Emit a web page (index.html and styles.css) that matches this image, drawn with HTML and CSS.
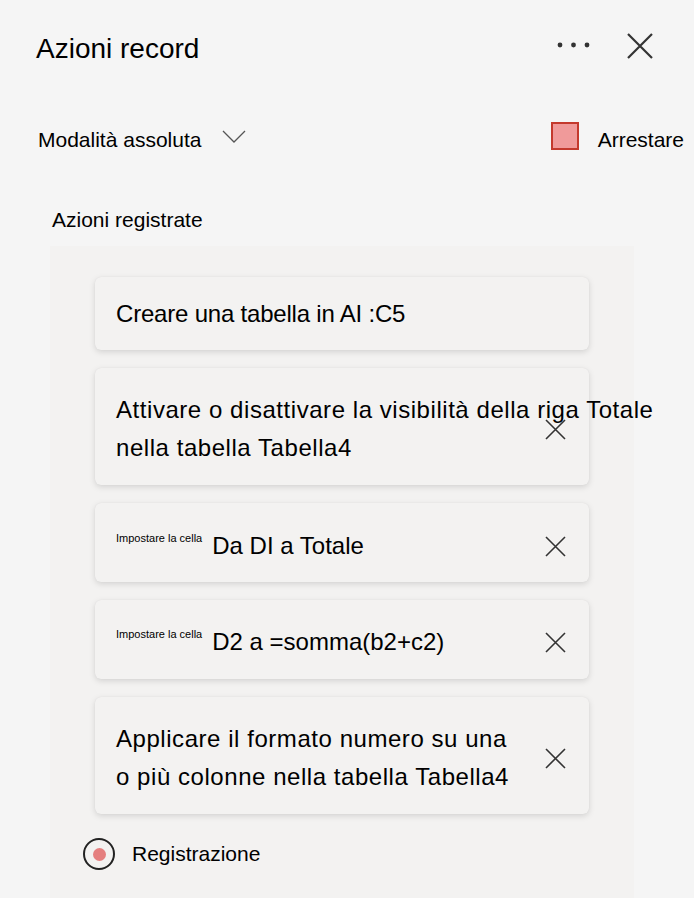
FILE: index.html
```html
<!DOCTYPE html>
<html>
<head>
	<title>Azioni record</title>
	<link rel="stylesheet" href="styles.css">
</head>
<body>
	<div class="header">
		<div class="title">Azioni record</div>
		<svg class="dots" width="33" height="6" viewBox="0 0 33 6">
			<circle cx="3" cy="3" r="2.4" fill="#333"/>
			<circle cx="16.5" cy="3" r="2.4" fill="#333"/>
			<circle cx="30" cy="3" r="2.4" fill="#333"/>
		</svg>
		<svg class="close" width="26" height="26" viewBox="0 0 26 26">
			<path d="M1 1 L25 25 M25 1 L1 25" stroke="#333" stroke-width="2.2" fill="none"/>
		</svg>
	</div>

	<div class="mode-row">
		<span class="mode">Modalità assoluta</span>
		<svg class="chevron" width="24" height="13" viewBox="0 0 24 13">
			<path d="M1 1 L12 12 L23 1" stroke="#555" stroke-width="1.3" fill="none"/>
		</svg>
		<span class="stop-box"></span>
		<span class="stop">Arrestare</span>
	</div>

	<div class="section-label">Azioni registrate</div>

	<div class="panel">
		<div class="card first">
			<div class="card-text">Creare una tabella in AI :C5</div>
		</div>

		<div class="card">
			<div class="card-text nowrap">Attivare o disattivare la visibilità della riga Totale<br>nella tabella Tabella4</div>
			<svg class="remove" width="21" height="21" viewBox="0 0 21 21">
				<path d="M1 1 L20 20 M20 1 L1 20" stroke="#333" stroke-width="1.6" fill="none"/>
			</svg>
		</div>

		<div class="card cell">
			<div class="card-text"><span class="hint">Impostare la cella</span>Da DI a Totale</div>
			<svg class="remove" width="21" height="21" viewBox="0 0 21 21">
				<path d="M1 1 L20 20 M20 1 L1 20" stroke="#333" stroke-width="1.6" fill="none"/>
			</svg>
		</div>

		<div class="card">
			<div class="card-text"><span class="hint">Impostare la cella</span>D2 a =somma(b2+c2)</div>
			<svg class="remove" width="21" height="21" viewBox="0 0 21 21">
				<path d="M1 1 L20 20 M20 1 L1 20" stroke="#333" stroke-width="1.6" fill="none"/>
			</svg>
		</div>

		<div class="card">
			<div class="card-text nowrap">Applicare il formato numero su una<br>o più colonne nella tabella Tabella4</div>
			<svg class="remove" width="21" height="21" viewBox="0 0 21 21">
				<path d="M1 1 L20 20 M20 1 L1 20" stroke="#333" stroke-width="1.6" fill="none"/>
			</svg>
		</div>

		<div class="recording">
			<span class="radio"><span class="radio-dot"></span></span>
			<span>Registrazione</span>
		</div>
	</div>
</body>
</html>
```

FILE: styles.css
```css
body {
	margin: 0;
	background: #f5f5f5;
	font-family: "Liberation Sans", Arial, sans-serif;
	color: #000;
	overflow: hidden;
}

.header {
	display: flex;
	align-items: center;
	height: 40px;
	padding: 26px 41px 0 36px;
}

.title {
	font-size: 28px;
	margin-top: 5px;
	flex: 1;
}

.dots {
	margin-right: 37px;
	margin-top: -2px;
}

.mode-row {
	display: flex;
	align-items: center;
	height: 40px;
	margin-top: 54px;
	padding: 0 10px 0 38px;
	font-size: 21px;
}

.chevron {
	margin-left: 21px;
	margin-bottom: 8px;
}

.stop-box {
	width: 24px;
	height: 24px;
	background: #f09a9a;
	border: 2px solid #c4392d;
	margin-left: auto;
	margin-bottom: 8px;
}

.stop {
	margin-left: 19px;
}

.section-label {
	font-size: 21px;
	line-height: 24px;
	margin-top: 48px;
	padding-left: 52px;
}

.panel {
	margin: 14px 0 0 50px;
	width: 539px;
	min-height: 621px;
	background: #f3f2f1;
	padding: 31px 0 0 45px;
	display: flex;
	flex-direction: column;
	gap: 18px;
}

.card {
	width: 494px;
	box-sizing: border-box;
	display: flex;
	align-items: center;
	background: #f3f2f1;
	border-radius: 6px;
	box-shadow: 0 2px 6px rgba(0, 0, 0, 0.13), 0 0 1px rgba(0, 0, 0, 0.08);
	padding: 23px 23px 18px 21px;
	font-size: 24px;
	line-height: 38px;
}

.card.first {
	padding-top: 18px;
	padding-bottom: 17px;
	letter-spacing: -0.2px;
}

.card.cell {
	padding-top: 24px;
	padding-bottom: 17px;
}

.card-text {
	flex: 1;
	min-width: 0;
}

.nowrap {
	white-space: nowrap;
	letter-spacing: 0.55px;
}

.hint {
	font-size: 11px;
	line-height: 1;
	letter-spacing: 0;
	vertical-align: 12px;
	margin-right: 10px;
}

.remove {
	flex-shrink: 0;
}

.recording {
	display: flex;
	align-items: center;
	margin: 6px 0 0 -12px;
	font-size: 21px;
}

.radio {
	width: 28px;
	height: 28px;
	border: 2px solid #222;
	border-radius: 50%;
	display: flex;
	align-items: center;
	justify-content: center;
	margin-right: 17px;
}

.radio-dot {
	width: 13px;
	height: 13px;
	border-radius: 50%;
	background: #e57f7f;
}
```
